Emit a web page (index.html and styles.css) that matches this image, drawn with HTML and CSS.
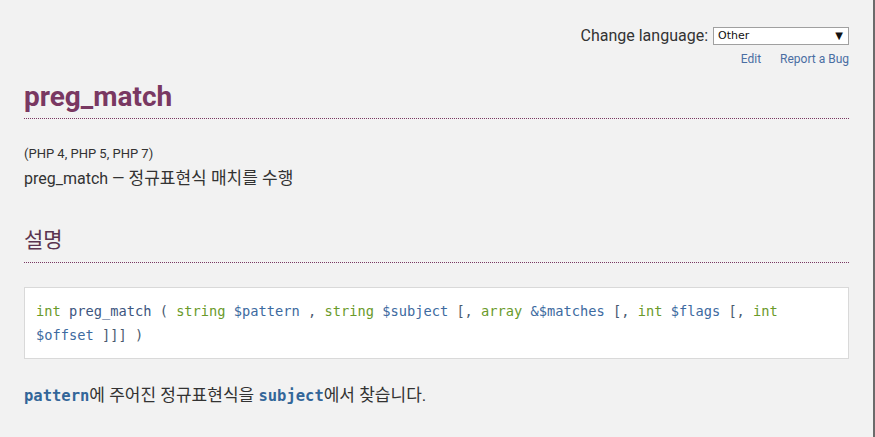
FILE: index.html
```html
<!DOCTYPE html>
<html lang="ko">
<head>
<meta charset="utf-8">
<title>preg_match</title>
<link rel="stylesheet" href="styles.css">
</head>
<body>
<div class="page">
  <div class="content">
    <div class="topbar">
      <div class="lang">
        <label class="lang-label">Change language:</label>
        <div class="select"><span>Other</span><span class="arrow">▼</span></div>
      </div>
      <div class="links">
        <a class="link">Edit</a>
        <a class="link">Report a Bug</a>
      </div>
    </div>
    <h1 class="title">preg_match</h1>
    <p class="verinfo">(PHP 4, PHP 5, PHP 7)</p>
    <p class="refpurpose">preg_match — <span class="ko">정규표현식 매치를 수행</span></p>
    <h2 class="section"><span class="ko">설명</span></h2>
    <div class="synopsis"><span class="type">int</span> <span class="method">preg_match</span> ( <span class="type">string</span> <span class="var">$pattern</span> , <span class="type">string</span> <span class="var">$subject</span> [, <span class="type">array</span> <span class="var">&amp;$matches</span> [, <span class="type">int</span> <span class="var">$flags</span> [, <span class="type">int</span><br><span class="var">$offset</span> ]]] )</div>
    <p class="para"><code class="param">pattern</code><span class="ko">에 주어진 정규표현식을 </span><code class="param">subject</code><span class="ko">에서 찾습니다.</span></p>
  </div>
</div>
</body>
</html>
```
FILE: styles.css
```css
html, body {
  margin: 0;
  padding: 0;
  background: #f2f2f2;
}
body {
  font-family: Roboto, "Noto Sans CJK KR", sans-serif;
  color: #333;
}
.page {
  width: 873px;
  height: 437px;
  border-right: 2px solid #6b6b6b;
  overflow: hidden;
}
.content {
  padding: 0 24px 0 24px;
}
.topbar {
  display: flex;
  flex-direction: column;
  align-items: flex-end;
  padding-top: 26px;
}
.lang {
  display: flex;
  align-items: center;
  gap: 5px;
}
.lang-label {
  font-size: 16px;
  color: #333;
}
.select {
  width: 125px;
  height: 16px;
  background: #fff;
  border: 1px solid #a0a0a0;
  display: flex;
  align-items: center;
  justify-content: space-between;
  padding: 0 5px 0 4px;
  box-sizing: content-box;
  font-size: 12px;
  color: #111;
  font-family: "DejaVu Sans", sans-serif;
}
.select span:first-child {
  font-size: 11px;
}
.arrow {
  font-size: 10px;
}
.links {
  display: flex;
  gap: 19px;
  margin-top: 7px;
}
.link {
  font-size: 12px;
  color: #4a6ea3;
}
.title {
  margin: 13px 0 0;
  font-size: 28px;
  font-weight: 700;
  color: #793862;
  line-height: 36px;
  padding-bottom: 3px;
  border-bottom: 1px dotted #793862;
}
.verinfo {
  margin: 25px 0 0;
  font-size: 13px;
  line-height: 20px;
}
.refpurpose {
  margin: 2px 0 0;
  font-size: 16px;
  line-height: 24px;
}
.ko {
  font-size: 17px;
}
.section {
  margin: 33px 0 0;
  font-size: 20px;
  font-weight: 400;
  color: #5a3450;
  line-height: 32px;
  padding-bottom: 6px;
  border-bottom: 1px dotted #793862;
}
.section .ko {
  font-size: 21px;
}
.synopsis {
  margin-top: 24px;
  background: #fff;
  border: 1px solid #d9d9d9;
  padding: 11px;
  font-family: "DejaVu Sans Mono", monospace;
  font-size: 13.7px;
  line-height: 24px;
  color: #4a5a70;
}
.type {
  color: #6a9a2a;
}
.method {
  color: #3d5680;
}
.var {
  color: #3d6aa0;
}
.para {
  margin: 24px 0 0;
  font-size: 16px;
  line-height: 24px;
}
.param {
  font-family: "DejaVu Sans Mono", monospace;
  font-weight: 700;
  font-size: 15.5px;
  color: #336699;
}
```
